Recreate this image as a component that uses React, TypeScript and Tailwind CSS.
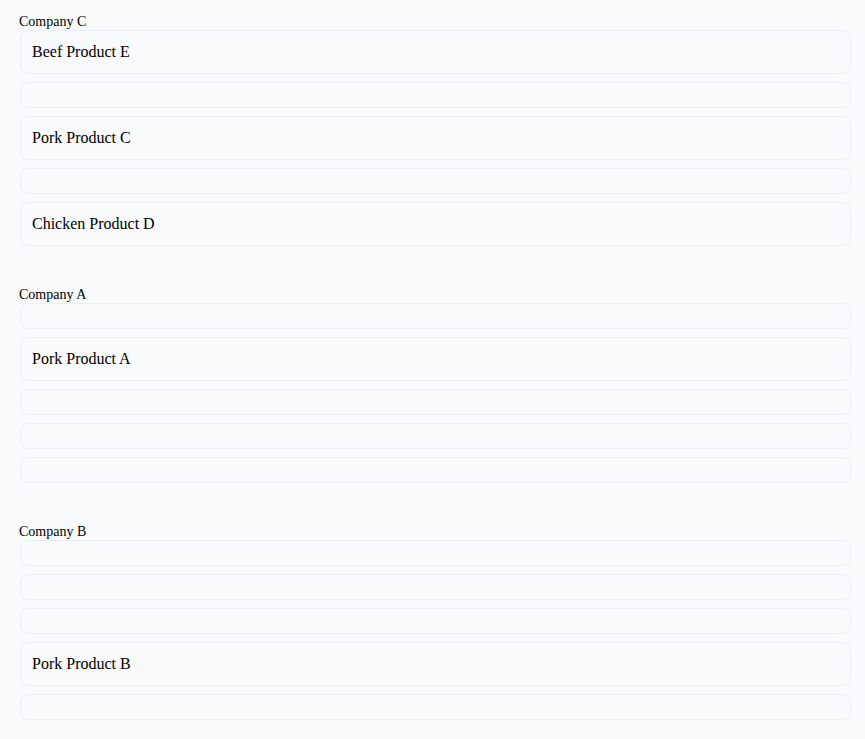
const sections: { company: string; items: string[] }[] = [
  { company: 'Company C', items: ['Beef Product E', '', 'Pork Product C', '', 'Chicken Product D'] },
  { company: 'Company A', items: ['', 'Pork Product A', '', '', ''] },
  { company: 'Company B', items: ['', '', '', 'Pork Product B', ''] },
]

export default function App() {
  return (
    <div className="min-h-screen bg-[#f9fafb] pt-[14px] pl-[19px] pr-[14px] pb-10 text-black [font-family:'Liberation_Serif','Times_New_Roman',serif]">
      <div className="flex flex-col gap-[41px]">
        {sections.map((section) => (
          <div key={section.company}>
            <div className="text-sm leading-4">{section.company}</div>
            <div className="flex flex-col gap-2 pl-px">
              {section.items.map((item, i) => (
                <div
                  key={i}
                  className="rounded-lg border border-[#eaeef7] bg-[#f9fafb] py-3 pl-[11px] pr-3 text-base leading-[18px]"
                >
                  {item}
                </div>
              ))}
            </div>
          </div>
        ))}
      </div>
    </div>
  )
}
